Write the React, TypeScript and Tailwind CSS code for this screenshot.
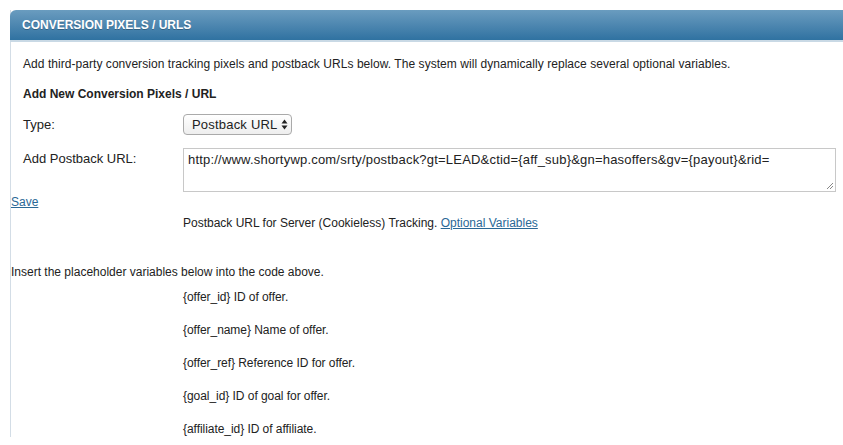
import React from "react";

const VARIABLES: { name: string; desc: string }[] = [
  { name: "{offer_id}", desc: "ID of offer." },
  { name: "{offer_name}", desc: "Name of offer." },
  { name: "{offer_ref}", desc: "Reference ID for offer." },
  { name: "{goal_id}", desc: "ID of goal for offer." },
  { name: "{affiliate_id}", desc: "ID of affiliate." },
];

const App: React.FC = () => {
  return (
    <div className="w-[843px] h-[445px] overflow-hidden bg-white font-['Liberation_Sans',Arial,sans-serif] text-[#222]">
      <div className="ml-[10px] mt-[10px] w-[850px] border-l border-[#d3dde6]">
        <div className="h-[32px] rounded-tl-[6px] bg-gradient-to-b from-[#6a9cbf] to-[#2f72a1] border-b-2 border-[#c9d9e5] -ml-px flex items-center pl-[12px]">
          <h2 className="text-[12px] font-bold text-white [text-shadow:0_1px_0_rgba(0,0,0,0.25)]">
            CONVERSION PIXELS / URLS
          </h2>
        </div>

        <div className="pl-[12px] pt-[14px]">
          <p className="text-[12px] leading-[16px] tracking-[0.05px]">
            Add third-party conversion tracking pixels and postback URLs below. The system will dynamically replace several optional variables.
          </p>
          <h3 className="mt-[14px] text-[12px] font-bold leading-[16px]">Add New Conversion Pixels / URL</h3>

          <div className="mt-[12px] flex items-center text-[13px]">
            <label className="w-[160px] shrink-0">Type:</label>
            <div className="h-[21px] w-[109px] shrink-0 whitespace-nowrap border border-[#aaa] rounded-[4px] bg-gradient-to-b from-white to-[#eee] flex items-center pl-[8px] pr-[3px] justify-between text-[13px] tracking-[0.2px]">
              <span>Postback URL</span>
              <svg width="7" height="11" viewBox="0 0 7 11" className="shrink-0">
                <path d="M3.5 0.5 L6.5 4.5 H0.5 Z" fill="#222" />
                <path d="M3.5 10.5 L6.5 6.5 H0.5 Z" fill="#222" />
              </svg>
            </div>
          </div>

          <div className="mt-[13px] flex items-start text-[13px]">
            <label className="w-[160px] shrink-0 pt-[1px]">Add Postback URL:</label>
            <div className="relative w-[653px] shrink-0 h-[44px] border border-[#c8c8c8] px-[4px] pt-[3px] text-[13px] leading-[16px] tracking-[0.2px]">
              http://www.shortywp.com/srty/postback?gt=LEAD&amp;ctid={"{aff_sub}"}&amp;gn=hasoffers&amp;gv={"{payout}"}&amp;rid=
              <svg width="8" height="8" viewBox="0 0 8 8" className="absolute right-[1px] bottom-[1px]">
                <path d="M7 1 L1 7 M7 4 L4 7" stroke="#888" strokeWidth="1" />
              </svg>
            </div>
          </div>
        </div>

        <a href="#" className="block mt-[2px] text-[12px] text-[#2a6896] underline leading-[16px]">
          Save
        </a>
        <p className="mt-[5px] pl-[172px] text-[12px] leading-[16px]">
          Postback URL for Server (Cookieless) Tracking.{" "}
          <a href="#" className="text-[#2a6896] underline">Optional Variables</a>
        </p>

        <p className="mt-[33px] text-[12px] leading-[16px]">
          Insert the placeholder variables below into the code above.
        </p>
        <ul className="pl-[172px] mt-[9px] flex flex-col gap-[17px] text-[12px] leading-[16px] tracking-[-0.05px]">
          {VARIABLES.map((v) => (
            <li key={v.name}>
              {v.name} {v.desc}
            </li>
          ))}
        </ul>
      </div>
    </div>
  );
};

export default App;
